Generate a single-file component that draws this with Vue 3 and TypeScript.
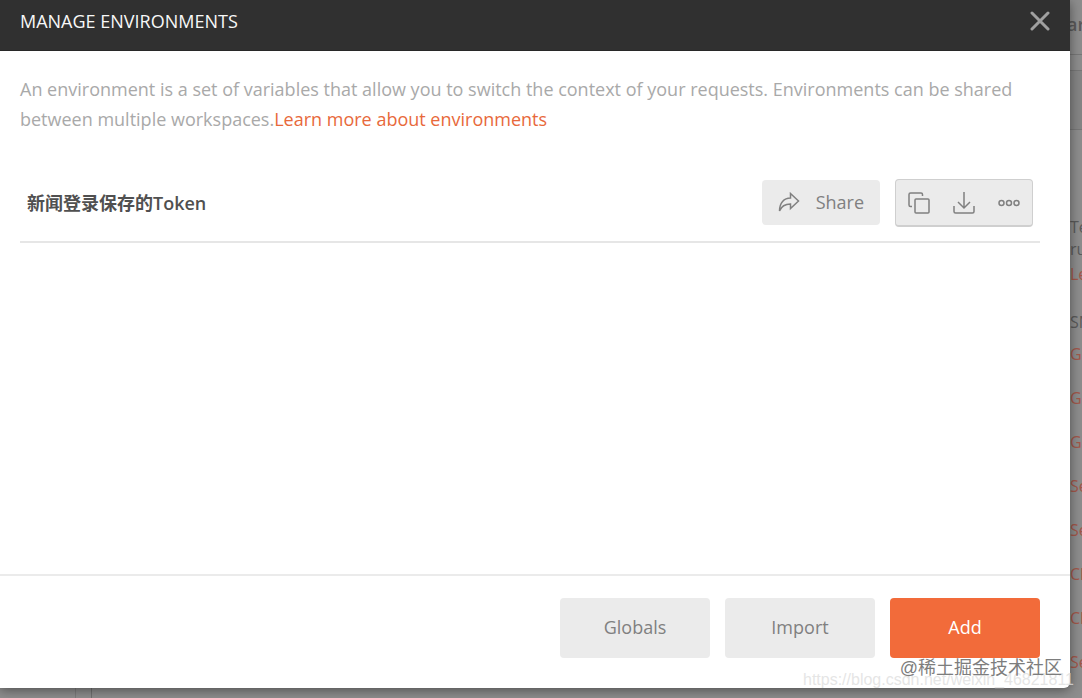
<script setup lang="ts">
import { ref } from 'vue'

interface SideEntry {
  text: string
  kind: 'plain' | 'link'
  gap: 'none' | 'small'
}

const open = ref(true)
const environments = ref<string[]>(['新闻登录保存的Token'])

const notes: SideEntry[] = [
  { text: 'Te', kind: 'plain', gap: 'none' },
  { text: 'ru', kind: 'plain', gap: 'none' },
  { text: 'Le', kind: 'link', gap: 'small' },
]
const snippets = ['G', 'G', 'G', 'Se', 'Se', 'Cl', 'Cl', 'Se']
</script>

<template>
  <div class="screen">
    <div class="workspace" aria-hidden="true">
      <div class="main-pane"><span class="gutter"></span></div>
      <div class="side-pane">
        <div class="side-head">ar</div>
        <div class="side-tabs"></div>
        <div class="side-bar"></div>
        <div class="notes">
          <div v-for="n in notes" :key="n.text" :class="['note', n.kind, n.gap]">{{ n.text }}</div>
        </div>
        <div class="caption">SN</div>
        <div v-for="(s, i) in snippets" :key="i" class="snippet">{{ s }}</div>
      </div>
    </div>

    <section v-if="open" class="modal" role="dialog" aria-labelledby="modal-title">
      <header class="modal-head">
        <h1 id="modal-title">MANAGE ENVIRONMENTS</h1>
        <button class="close" type="button" aria-label="Close" @click="open = false">
          <svg width="20" height="20" viewBox="0 0 20 20"><path d="M2 2L18 18M18 2L2 18" /></svg>
        </button>
      </header>

      <div class="modal-body">
        <p class="intro">
          An environment is a set of variables that allow you to switch the context of your requests. Environments can be shared between multiple workspaces.<a href="#">Learn more about environments</a>
        </p>
        <ul class="env-list">
          <li v-for="env in environments" :key="env" class="env">
            <span class="env-name">{{ env }}</span>
            <button class="share" type="button">
              <svg width="22" height="20" viewBox="0 0 22 20">
                <path d="M12.5 1.5L20.5 9L12.5 16.5V12C7 12 3.5 14 1.5 19C1.5 11 6 6 12.5 6Z" />
              </svg>
              Share
            </button>
            <div class="tools">
              <button type="button" aria-label="Duplicate">
                <svg width="22" height="22" viewBox="0 0 22 22">
                  <path d="M4 14.5H2.5Q1 14.5 1 13V2.5Q1 1 2.5 1H13Q14.5 1 14.5 2.5V4" />
                  <rect x="7" y="7" width="14" height="14" rx="1" />
                </svg>
              </button>
              <button type="button" aria-label="Download">
                <svg width="22" height="22" viewBox="0 0 22 22">
                  <path d="M11 0V16M5 10L11 16L17 10M1 14V19.5Q1 21 2.5 21H19.5Q21 21 21 19.5V14" />
                </svg>
              </button>
              <button type="button" aria-label="More">
                <svg width="22" height="8" viewBox="0 0 22 8">
                  <circle cx="3.5" cy="4" r="2.5" />
                  <circle cx="11" cy="4" r="2.5" />
                  <circle cx="18.5" cy="4" r="2.5" />
                </svg>
              </button>
            </div>
          </li>
        </ul>
      </div>

      <footer class="modal-foot">
        <button type="button">Globals</button>
        <button type="button">Import</button>
        <button type="button" class="primary">Add</button>
      </footer>
    </section>

    <div class="mark url">https://blog.csdn.net/weixin_46821811</div>
    <div class="mark community">@稀土掘金技术社区</div>
  </div>
</template>

<style>
body {
  margin: 0;
  overflow: hidden;
}
</style>

<style scoped>
.screen {
  position: relative;
  display: flex;
  box-sizing: border-box;
  height: 100vh;
  padding: 0 12px 10px 0;
  background: #8d8d8d;
  font-family: "Open Sans", "Noto Sans CJK SC", sans-serif;
  font-size: 18px;
}

.workspace {
  position: absolute;
  inset: 0;
  display: flex;
  overflow: hidden;
}

.main-pane {
  flex: 1;
  display: flex;
}

.gutter {
  width: 15px;
  margin-left: 75px;
  border-left: 1px solid #7c7c7c;
  border-right: 1px solid #707070;
}

.side-pane {
  width: 12px;
  overflow: hidden;
  white-space: nowrap;
  font-size: 16px;
  color: #5a5a5a;
}

.side-head {
  height: 54px;
  margin-left: -3px;
  line-height: 48px;
  font-size: 18px;
  font-weight: 600;
  border-bottom: 1px solid #777;
}

.side-tabs {
  height: 15px;
  border-bottom: 1px solid #777;
}

.side-bar {
  height: 58px;
  background: #858585;
  border-bottom: 1px solid #777;
}

.notes {
  margin-top: 86px;
}

.note {
  line-height: 22px;
}

.note.small {
  margin-top: 3px;
}

.note.link,
.snippet {
  color: #a3574a;
}

.caption {
  margin-top: 26px;
  line-height: 22px;
}

.snippet {
  line-height: 22px;
  margin: 10px 0 22px;
}

.snippet + .snippet {
  margin-top: 0;
}

.modal {
  position: relative;
  flex: 1;
  display: flex;
  flex-direction: column;
  overflow: hidden;
  background: #fff;
  border-radius: 0 0 6px 0;
  box-shadow: 0 2px 12px rgba(0, 0, 0, 0.45);
}

.modal-head {
  display: flex;
  align-items: center;
  justify-content: space-between;
  padding: 0 20px 8px;
  height: 42px;
  background: #303030;
  border-bottom: 1px solid #282828;
}

h1 {
  margin: 0;
  font-size: 18px;
  font-weight: 400;
  line-height: 24px;
  color: #f8f8f8;
}

button {
  font: inherit;
  border: 0;
  padding: 0;
  color: #808080;
  background: #ebebeb;
  cursor: pointer;
}

svg {
  display: block;
  fill: none;
  stroke: #808080;
  stroke-width: 1.5;
}

.close {
  background: none;
}

.close svg {
  stroke: #a0a0a0;
  stroke-width: 3;
  stroke-linecap: round;
}

.modal-body {
  flex: 1;
  padding: 23px 30px 0 20px;
}

.intro {
  margin: 0;
  line-height: 30px;
  color: #a9a9a9;
}

.intro a {
  color: #e8693b;
  text-decoration: none;
}

.env-list {
  list-style: none;
  margin: 45px 0 0;
  padding: 0;
}

.env {
  display: flex;
  align-items: center;
  padding: 0 7px 14px;
  border-bottom: 2px solid #e6e6e6;
}

.env-name {
  flex: 1;
  padding-bottom: 3px;
  font-weight: 600;
  color: #505050;
}

.share {
  display: flex;
  align-items: center;
  gap: 16px;
  height: 45px;
  padding: 0 16px;
  margin: 0 15px 2px 0;
  border-radius: 4px;
}

.tools {
  display: flex;
  box-sizing: border-box;
  height: 48px;
  padding-right: 1px;
  border: 1px solid #cfcfcf;
  border-bottom-width: 2px;
  border-radius: 4px;
  background: #ebebeb;
}

.tools button {
  display: flex;
  align-items: center;
  justify-content: center;
  width: 45px;
  background: none;
}

.modal-foot {
  display: flex;
  justify-content: flex-end;
  gap: 15px;
  padding: 22px 30px 30px;
  border-top: 2px solid #ebebeb;
}

.modal-foot button {
  width: 150px;
  height: 60px;
  padding-bottom: 2px;
  border-radius: 4px;
}

.modal-foot .primary {
  color: #fff;
  background: #f26b3a;
}

.mark {
  position: absolute;
  white-space: nowrap;
  pointer-events: none;
}

.url {
  right: 8px;
  bottom: 8px;
  font: 16px/20px "Liberation Sans", sans-serif;
  color: rgba(222, 222, 222, 0.8);
}

.community {
  right: 20px;
  bottom: 18px;
  font: 18px/24px "Liberation Sans", "Noto Sans CJK SC", sans-serif;
  color: #7d7d7d;
}
</style>
